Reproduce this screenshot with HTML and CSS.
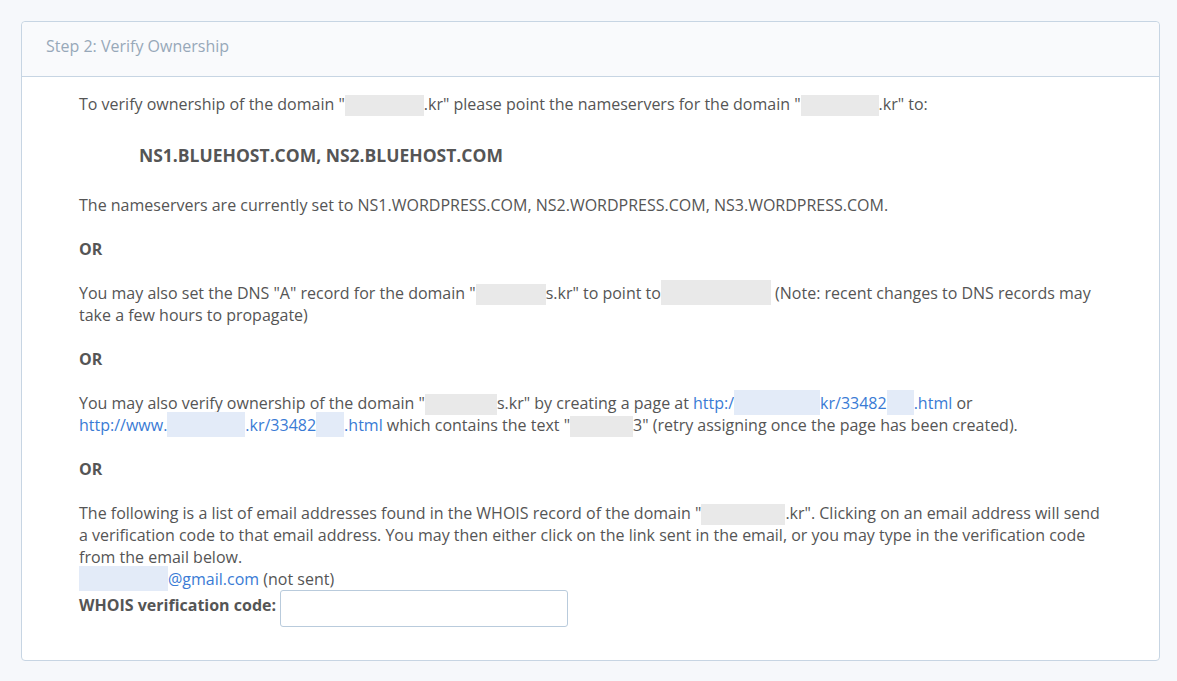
FILE: index.html
```html
<!DOCTYPE html>
<html lang="en">
<head>
    <meta charset="UTF-8">
    <title>Verify Ownership</title>
    <link rel="stylesheet" href="styles.css">
</head>
<body>
    <div class="panel">
        <div class="panel-heading">Step 2: Verify Ownership</div>
        <div class="panel-body">
            <p>To verify ownership of the domain "<span class="blur" style="width:79px"></span>.kr" please point the nameservers for the domain "<span class="blur" style="width:78px"></span>.kr" to:</p>
            <div class="nameservers">NS1.BLUEHOST.COM, NS2.BLUEHOST.COM</div>
            <p>The nameservers are currently set to NS1.WORDPRESS.COM, NS2.WORDPRESS.COM, NS3.WORDPRESS.COM.</p>
            <p class="or">OR</p>
            <p>You may also set the DNS "A" record for the domain "<span class="blur" style="width:70px"></span>s.kr" to point to<span class="blur tall" style="width:110px"></span> (Note: recent changes to DNS records may take a few hours to propagate)</p>
            <p class="or">OR</p>
            <p>You may also verify ownership of the domain "<span class="blur" style="width:72px"></span>s.kr" by creating a page at <a href="#" class="url">http:/<span class="blur link" style="width:86px"></span>kr/33482<span class="blur link" style="width:27px"></span>.html</a> or <a href="#" class="url">http://www.<span class="blur link" style="width:78px"></span>.kr/33482<span class="blur link" style="width:28px"></span>.html</a> which contains the text "<span class="blur" style="width:63px"></span>3" (retry assigning once the page has been created).</p>
            <p class="or">OR</p>
            <p class="last">The following is a list of email addresses found in the WHOIS record of the domain "<span class="blur" style="width:84px"></span>.kr". Clicking on an email address will send a verification code to that email address. You may then either click on the link sent in the email, or you may type in the verification code from the email below.<br>
            <a href="#" class="url"><span class="blur link" style="width:89px"></span>@gmail.com</a> (not sent)</p>
            <div class="code-row">
                <label for="code">WHOIS verification code:</label>
                <input type="text" id="code">
            </div>
        </div>
    </div>
</body>
</html>
```

FILE: styles.css
```css
body {
    font-family: 'Open Sans', sans-serif;
    font-size: 16px;
    line-height: 22px;
    color: #555;
    background-color: #f6f8fb;
    margin: 0;
    padding: 21px 17px 21px 21px;
}
.panel {
    background-color: #fff;
    border: 1px solid #c7d5e3;
    border-radius: 4px;
}
.panel-heading {
    background-color: #f9fafc;
    color: #97a8b9;
    padding: 13px 24px 19px;
    border-bottom: 1px solid #c7d5e3;
    border-radius: 4px 4px 0 0;
}
.panel-body {
    padding: 16px 50px 33px 57px;
}
p {
    margin: 0 0 22px;
}
p.last {
    margin-bottom: 0;
}
.or {
    font-weight: 700;
}
.nameservers {
    font-weight: 700;
    font-size: 17.5px;
    padding-left: 60px;
    margin: 29px 0 28px;
}
a {
    color: #3a7bd5;
    text-decoration: none;
}
.url {
    white-space: nowrap;
}
/* redacted parts of the text */
.blur {
    display: inline-block;
    height: 21px;
    margin: -3px 0;
    vertical-align: -3px;
    background-color: #e9e9e9;
}
.blur.tall,
.blur.link {
    height: 25px;
    margin: -4px 0;
    vertical-align: -2px;
}
.blur.link {
    background-color: #e3ebf8;
}
.code-row {
    display: flex;
    align-items: center;
    gap: 4px;
    font-weight: 700;
}
.code-row label {
    padding-bottom: 7px;
}
.code-row input {
    width: 286px;
    height: 35px;
    box-sizing: content-box;
    padding: 0;
    border: 1px solid #b9cbdc;
    border-radius: 3px;
    margin: 0;
}
```
